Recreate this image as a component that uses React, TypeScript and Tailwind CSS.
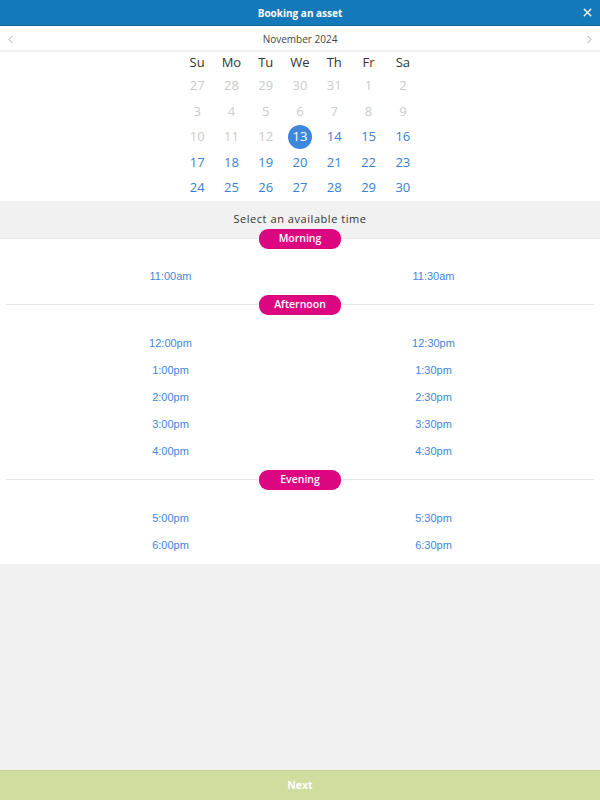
import { X, ChevronLeft, ChevronRight } from "lucide-react";

const days = ["Su", "Mo", "Tu", "We", "Th", "Fr", "Sa"];

// November 2024 grid; leading days from October are disabled
const weeks: { n: number; active: boolean }[][] = [
  [27, 28, 29, 30, 31, 1, 2].map((n) => ({ n, active: false })),
  [3, 4, 5, 6, 7, 8, 9].map((n) => ({ n, active: false })),
  [10, 11, 12, 13, 14, 15, 16].map((n) => ({ n, active: n >= 13 })),
  [17, 18, 19, 20, 21, 22, 23].map((n) => ({ n, active: true })),
  [24, 25, 26, 27, 28, 29, 30].map((n) => ({ n, active: true })),
];

const sections = [
  { name: "Morning", slots: ["11:00am", "11:30am"], line: false, pad: "pt-[14px] pb-[5px]" },
  {
    name: "Afternoon",
    slots: ["12:00pm", "12:30pm", "1:00pm", "1:30pm", "2:00pm", "2:30pm", "3:00pm", "3:30pm", "4:00pm", "4:30pm"],
    line: true,
    pad: "pt-[15px] pb-[5px]",
  },
  { name: "Evening", slots: ["5:00pm", "5:30pm", "6:00pm", "6:30pm"], line: true, pad: "pt-[15px] pb-[4px]" },
];

function SectionHeader({ name, line }: { name: string; line: boolean }) {
  return (
    <div className="flex items-center h-[20px] px-[6px]">
      <div className={`flex-1 h-px ${line ? "bg-[#e6e8e8]" : ""}`}></div>
      <div className="w-[82px] h-[20px] rounded-[9px] bg-[#dc0780] text-white text-[10.5px] font-semibold flex items-center justify-center">
        {name}
      </div>
      <div className={`flex-1 h-px ${line ? "bg-[#e6e8e8]" : ""}`}></div>
    </div>
  );
}

export default function App() {
  return (
    <div className="h-[800px] w-[600px] flex flex-col bg-[#f1f1f1] font-['Open_Sans',sans-serif]">
      {/* Title bar */}
      <div className="relative h-[26px] pt-px bg-[#1479b8] border-b border-[#0f66a0] flex items-center justify-center">
        <span className="text-white text-[10px] font-bold">Booking an asset</span>
        <X className="absolute right-[6px] top-[6px] text-white" size={13} strokeWidth={2.5} />
      </div>

      {/* Month nav */}
      <div className="relative h-[26px] pt-[3px] bg-white border-b-2 border-[#eef1f0] flex items-center justify-center">
        <ChevronLeft className="absolute left-[4px] top-[7px] text-[#777]" size={13} strokeWidth={1.2} />
        <span className="text-[10px] text-[#444]">November 2024</span>
        <ChevronRight className="absolute right-[4px] top-[7px] text-[#777]" size={13} strokeWidth={1.2} />
      </div>

      {/* Calendar */}
      <div className="bg-white pt-px">
        <div className="w-[240px] mx-auto">
          <div className="grid grid-cols-7 h-[20px] items-center text-center text-[13px] text-[#333]">
            {days.map((d) => (
              <div key={d}>{d}</div>
            ))}
          </div>
          {weeks.map((w, i) => (
            <div key={i} className="grid grid-cols-7 h-[25.5px] items-center text-center text-[13px]">
              {w.map((d, j) => (
                <div key={j} className="flex justify-center">
                  {d.n === 13 && d.active ? (
                    <span className="w-[24px] h-[24px] rounded-full bg-[#3d88dd] text-white flex items-center justify-center">
                      {d.n}
                    </span>
                  ) : (
                    <span className={d.active ? "text-[#3a7fd5]" : "text-[#c9cccc]"}>{d.n}</span>
                  )}
                </div>
              ))}
            </div>
          ))}
        </div>
      </div>

      {/* Select time heading */}
      <div className="h-[38px] bg-[#f1f1f1] border-b border-[#e6e8e8] flex items-center justify-center">
        <span className="text-[11px] tracking-[0.05em] text-[#333]">Select an available time</span>
      </div>

      {/* Time slots */}
      <div className="bg-white pb-px">
        {sections.map((s, i) => (
          <div key={s.name} className={i === 0 ? "-mt-[10px]" : ""}>
            <SectionHeader name={s.name} line={s.line} />
            <div
              className={`grid grid-cols-2 pl-[39px] pr-[35px] ${s.pad} font-['Liberation_Sans',Arial,sans-serif] text-[11px] text-[#3f86de]`}
            >
              {s.slots.map((t) => (
                <div key={t} className="h-[27px] flex items-center justify-center">
                  {t}
                </div>
              ))}
            </div>
          </div>
        ))}
      </div>

      <div className="flex-1 bg-[#f1f1f1]"></div>

      {/* Next */}
      <div className="h-[30px] pt-px bg-[#cfdd9f] border-t border-[#c6d496] flex items-center justify-center">
        <span className="text-white text-[10.5px] font-bold">Next</span>
      </div>
    </div>
  );
}
